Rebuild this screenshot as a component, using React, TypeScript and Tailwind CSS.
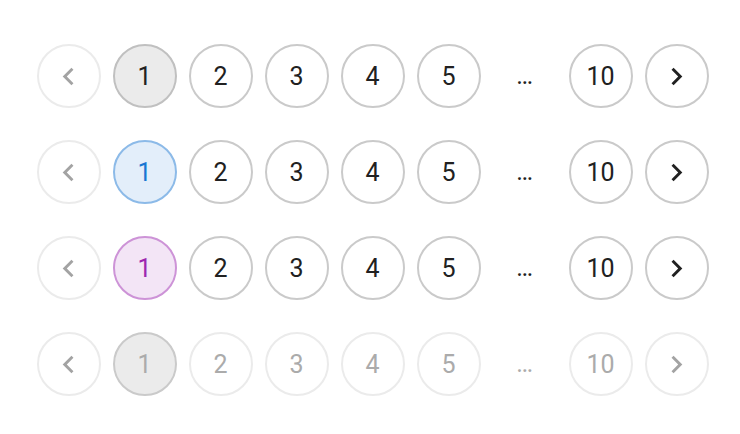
import { ReactNode } from 'react';

type Variant = 'standard' | 'primary' | 'secondary' | 'disabled';

const pages: (number | 'dots')[] = [1, 2, 3, 4, 5, 'dots', 10];

const selectedStyles: Record<Variant, string> = {
  standard: 'bg-[#ebebeb] border-[#c0c0c0] text-[#212121]',
  primary: 'bg-[#e3eefa] border-[#8cbae8] text-[#1976d2]',
  secondary: 'bg-[#f3e5f6] border-[#cd93d7] text-[#9c27b0]',
  disabled: 'bg-[#ebebeb] border-[#cacaca] text-[#ababab]',
};

function Chevron({ dir, muted }: { dir: 'left' | 'right'; muted: boolean }) {
  return (
    <svg viewBox="0 0 24 24" className={`w-[35px] h-[35px] ${muted ? 'fill-[#a3a3a3]' : 'fill-[#212121]'}`}>
      {dir === 'left' ? (
        <path d="M15.41 7.41 14 6l-6 6 6 6 1.41-1.41L10.83 12z" />
      ) : (
        <path d="M10 6 8.59 7.41 13.17 12l-4.58 4.59L10 18l6-6z" />
      )}
    </svg>
  );
}

function Item({ children, className }: { children: ReactNode; className: string }) {
  return (
    <button
      className={`w-16 h-16 rounded-full border-2 flex items-center justify-center text-[25px] leading-none ${className}`}
    >
      {children}
    </button>
  );
}

function PaginationRow({ variant }: { variant: Variant }) {
  const disabled = variant === 'disabled';
  const normal = disabled ? 'border-[#ebebeb] text-[#ababab]' : 'border-[#cacaca] text-[#212121]';

  return (
    <nav className="flex items-center gap-3 ml-[5px]">
      <Item className="border-[#ebebeb]">
        <Chevron dir="left" muted />
      </Item>
      {pages.map((p, i) =>
        p === 'dots' ? (
          <div key={i} className={`w-16 h-16 flex items-center justify-center text-[25px] ${disabled ? 'text-[#ababab]' : 'text-[#212121]'}`}>
            …
          </div>
        ) : (
          <Item key={i} className={p === 1 ? selectedStyles[variant] : normal}>
            {p}
          </Item>
        )
      )}
      <Item className={disabled ? 'border-[#ebebeb]' : 'border-[#cacaca]'}>
        <Chevron dir="right" muted={disabled} />
      </Item>
    </nav>
  );
}

export default function App() {
  return (
    <div
      className="w-[740px] h-[434px] bg-white flex flex-col items-center gap-8 pt-[44px]"
      style={{ fontFamily: 'Roboto, "Liberation Sans", sans-serif' }}
    >
      <PaginationRow variant="standard" />
      <PaginationRow variant="primary" />
      <PaginationRow variant="secondary" />
      <PaginationRow variant="disabled" />
    </div>
  );
}
